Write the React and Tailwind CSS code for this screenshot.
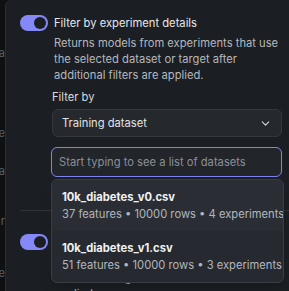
import { ChevronDown } from "lucide-react";

function Toggle() {
  return (
    <div className="flex h-4 w-7 shrink-0 items-center justify-end rounded-full bg-[#8589f7] pr-[2px]">
      <div className="h-3 w-3 rounded-full bg-[#1b1e22]" />
    </div>
  );
}

const datasets = [
  { name: "10k_diabetes_v0.csv", meta: "37 features • 10000 rows • 4 experiments", active: true },
  { name: "10k_diabetes_v1.csv", meta: "51 features • 10000 rows • 3 experiments" },
];

export default function App() {
  return (
    <div
      className="flex h-[291px] w-[289px] overflow-hidden bg-[#0e1012] text-[11.2px]"
      style={{ fontFamily: "Inter, 'Noto Sans', sans-serif" }}
    >
      {/* page behind the panel */}
      <div className="flex w-[5px] shrink-0 flex-col items-end overflow-hidden text-[11px] leading-4 text-[#5d6168]">
        <span className="mt-[45px]">a</span>
        <span className="mt-[64px] whitespace-nowrap">Fe</span>
        <span className="mt-[22px]">a</span>
        <span className="mt-[34px]">r</span>
        <span className="mt-[36px]">e</span>
      </div>

      <div className="relative flex-1 rounded-tl-md border-l border-[#2a2d32] bg-[#1b1e22] pl-[14px] pr-[7px] pt-[15px]">
        <div className="flex gap-[6px]">
          <Toggle />
          <div className="flex min-w-0 flex-1 flex-col">
            <div className="leading-4 text-[#e7e8ea]">Filter by experiment details</div>
            <p className="mt-1 leading-4 text-[#b4b8bf]">
              Returns models from experiments that use the selected dataset or target after
              additional filters are applied.
            </p>
            <div className="-ml-[2px] mt-[6px] flex flex-col">
              <label className="leading-4 text-[#d9dbde]">Filter by</label>
              <div className="mt-1 flex h-7 items-center justify-between rounded-md border border-[#34383e] bg-[#25292e] pl-[9px] pr-[9px] text-[#e1e3e6]">
                <span>Training dataset</span>
                <ChevronDown size={13} strokeWidth={2} className="text-[#d4d6da]" />
              </div>
              <input
                placeholder="Start typing to see a list of datasets"
                className="-ml-px mt-[10px] h-[30px] rounded-md border border-[#7f83f0] bg-[#22252a] px-[7px] text-[#e1e3e6] outline-none placeholder:text-[#8b9098]"
              />
            </div>
          </div>
        </div>

        <div className="mr-[-7px] mt-[33px] h-px bg-[#303338]" />

        <div className="mt-[23px] flex gap-[6px]">
          <Toggle />
          <div className="flex min-w-0 flex-1 flex-col">
            <div className="leading-4 text-[#e7e8ea]">Filter by model details</div>
            <p className="mt-1 leading-4 text-[#b4b8bf]">
              Returns models that match the selected dataset or target after additional
              filters are applied.
            </p>
          </div>
        </div>

        {/* autocomplete menu */}
        <div className="absolute left-[45px] top-[179px] w-[233px] overflow-hidden rounded-md border border-[#393d44] bg-[#262a30] shadow-lg">
          {datasets.map((d) => (
            <div
              key={d.name}
              className={`flex h-[51px] flex-col justify-center whitespace-nowrap px-[10px] ${d.active ? "bg-[#2a2e34]" : ""}`}
            >
              <span className="font-bold leading-[17px] text-[#f1f2f3]">{d.name}</span>
              <span className="leading-[17px] text-[#b2b6bd]">{d.meta}</span>
            </div>
          ))}
        </div>
      </div>
    </div>
  );
}
